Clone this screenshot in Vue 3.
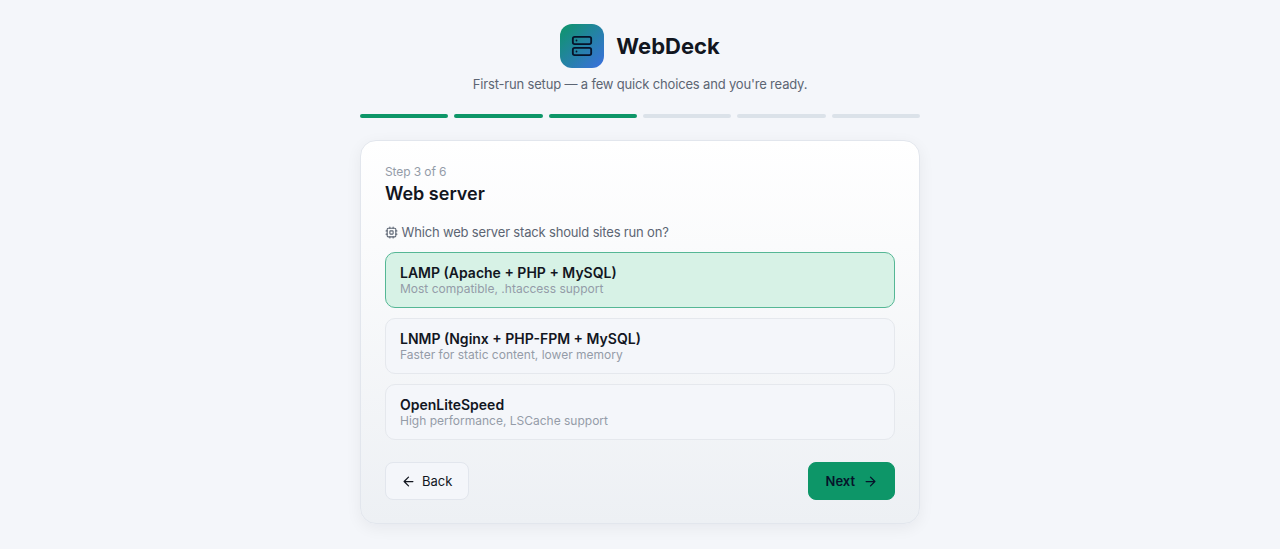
<template>
  <div class="setup">
    <div class="wrap">
      <!-- Header -->
      <header class="head">
        <div class="brand">
          <div class="logo">
            <svg class="icon" width="22" height="22" viewBox="0 0 24 24">
              <rect x="2" y="2" width="20" height="8" rx="2" />
              <rect x="2" y="14" width="20" height="8" rx="2" />
              <path d="M6 6h.01M6 18h.01" />
            </svg>
          </div>
          <h1>WebDeck</h1>
        </div>
        <p class="tagline">First-run setup — a few quick choices and you're ready.</p>
      </header>

      <!-- Progress -->
      <div class="progress">
        <span v-for="n in total" :key="n" class="bar" :class="{ done: n <= step }"></span>
      </div>

      <!-- Step card -->
      <div class="card">
        <div class="step">Step {{ step }} of {{ total }}</div>
        <h2>Web server</h2>

        <div class="question">
          <svg class="icon" width="13" height="13" viewBox="0 0 24 24">
            <rect x="4" y="4" width="16" height="16" rx="2" />
            <rect x="9" y="9" width="6" height="6" rx="1" />
            <path d="M15 2v2M15 20v2M2 15h2M2 9h2M20 15h2M20 9h2M9 2v2M9 20v2" />
          </svg>
          <span>Which web server stack should sites run on?</span>
        </div>

        <div class="options">
          <button
            v-for="s in stacks"
            :key="s.id"
            class="option"
            :class="{ active: s.id === selected }"
            @click="selected = s.id"
          >
            <span class="name">{{ s.name }}</span>
            <span class="desc">{{ s.desc }}</span>
          </button>
        </div>

        <div class="actions">
          <button class="btn" @click="back">
            <svg class="icon" width="15" height="15" viewBox="0 0 24 24">
              <path d="m12 19-7-7 7-7M19 12H5" />
            </svg>
            <span>Back</span>
          </button>
          <button class="btn primary" @click="next">
            <span>Next</span>
            <svg class="icon" width="15" height="15" viewBox="0 0 24 24">
              <path d="M5 12h14M12 5l7 7-7 7" />
            </svg>
          </button>
        </div>
      </div>
    </div>
  </div>
</template>

<script setup>
import { ref } from 'vue'

const total = 6
const step = ref(3)
const selected = ref('lamp')

const stacks = [
  { id: 'lamp', name: 'LAMP (Apache + PHP + MySQL)', desc: 'Most compatible, .htaccess support' },
  { id: 'lnmp', name: 'LNMP (Nginx + PHP-FPM + MySQL)', desc: 'Faster for static content, lower memory' },
  { id: 'ols', name: 'OpenLiteSpeed', desc: 'High performance, LSCache support' }
]

const back = () => {
  if (step.value > 1) step.value--
}

const next = () => {
  if (step.value < total) step.value++
}
</script>

<style>
body {
  background: #f4f6fa;
}
</style>

<style scoped>
.setup {
  box-sizing: border-box;
  display: flex;
  justify-content: center;
  height: 549px;
  padding-top: 24px;
  background: #f4f6fa;
  color: #12161f;
  font-family: Inter, "Liberation Sans", sans-serif;
  font-size: 14px;
}

.wrap {
  width: 560px;
}

.icon {
  display: block;
  flex: none;
  fill: none;
  stroke: currentColor;
  stroke-width: 2;
  stroke-linecap: round;
  stroke-linejoin: round;
}

/* Header */
.brand {
  display: flex;
  align-items: center;
  justify-content: center;
  gap: 12px;
}

.logo {
  display: flex;
  align-items: center;
  justify-content: center;
  width: 44px;
  height: 44px;
  border-radius: 12px;
  background: linear-gradient(135deg, #0d9668, #3b6fe0);
  color: #06132a;
}

h1 {
  margin: 0;
  font-size: 22px;
  font-weight: 700;
  line-height: 33px;
}

.tagline {
  margin: 6px 0 0;
  color: #5c6573;
  font-size: 13px;
  letter-spacing: -0.17px;
  line-height: 20px;
  text-align: center;
}

/* Progress */
.progress {
  display: flex;
  gap: 6px;
  margin: 20px 0 22px;
}

.bar {
  flex: 1;
  height: 4px;
  border-radius: 2px;
  background: #dbe2e9;
}

.bar.done {
  background: #0d9668;
}

/* Card */
.card {
  box-sizing: border-box;
  height: 384px;
  padding: 22px 24px 24px;
  border: 1px solid #e2e6ed;
  border-radius: 16px;
  background: linear-gradient(180deg, #ffffff, #edf0f4);
  box-shadow: 0 4px 16px rgba(18, 22, 31, 0.06);
}

.step {
  color: #949ca8;
  font-size: 12px;
  letter-spacing: -0.1px;
  line-height: 18px;
}

h2 {
  margin: 0;
  font-size: 18px;
  font-weight: 600;
  line-height: 25px;
}

.question {
  display: flex;
  align-items: center;
  gap: 3.5px;
  margin: 16px 0 10px;
  color: #5c6573;
  font-size: 13px;
  letter-spacing: -0.17px;
  line-height: 20px;
}

.options {
  display: flex;
  flex-direction: column;
  gap: 10px;
}

.option {
  display: flex;
  flex-direction: column;
  justify-content: center;
  height: 56px;
  padding: 0 14px;
  border: 1px solid #e5e8ed;
  border-radius: 10px;
  background: #f4f6fa;
  color: inherit;
  font-family: inherit;
  text-align: left;
  cursor: pointer;
}

.option.active {
  border-color: #55b795;
  background: #d7f2e6;
}

.name {
  font-size: 14px;
  font-weight: 600;
  line-height: 17px;
}

.desc {
  color: #949ca8;
  font-size: 12px;
  line-height: 15px;
}

.actions {
  display: flex;
  justify-content: space-between;
  margin-top: 22px;
}

.btn {
  display: flex;
  align-items: center;
  gap: 6px;
  height: 38px;
  padding: 0 16px 0 15px;
  border: 1px solid #e2e6ed;
  border-radius: 8px;
  background: #f4f6fa;
  color: #12161f;
  font-family: inherit;
  font-size: 13px;
  cursor: pointer;
}

.btn.primary {
  gap: 8px;
  padding-left: 17px;
  border-color: #0d9668;
  background: #0d9668;
  color: #06132a;
  font-weight: 600;
}
</style>
